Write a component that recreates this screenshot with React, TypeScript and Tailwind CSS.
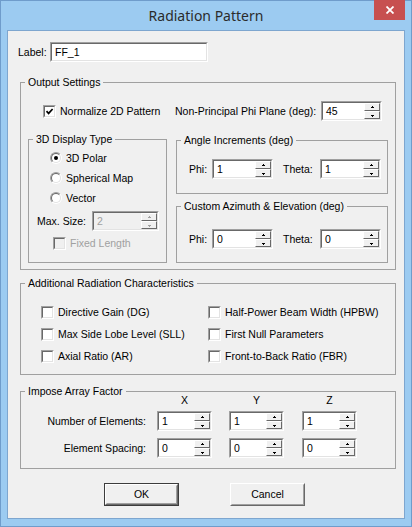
import type { ReactNode } from "react";

const outerSunken =
  "border border-t-[#a0a0a0] border-l-[#a0a0a0] border-b-white border-r-white";
const innerSunken =
  "border border-t-[#696969] border-l-[#696969] border-b-[#e3e3e3] border-r-[#e3e3e3]";

function Group({
  title,
  className,
  children,
}: {
  title: string;
  className: string;
  children?: ReactNode;
}) {
  return (
    <fieldset className={`min-w-0 border border-[#a0a0a0] ${className}`}>
      <legend className="ml-[4px] px-[3px] leading-[13px]">{title}</legend>
      {children}
    </fieldset>
  );
}

function Arrow({ up, color }: { up?: boolean; color: string }) {
  return (
    <svg width="5" height="3" viewBox="0 0 5 3" shapeRendering="crispEdges">
      {up ? (
        <>
          <rect x="2" y="0" width="1" height="1" fill={color} />
          <rect x="1" y="1" width="3" height="1" fill={color} />
        </>
      ) : (
        <>
          <rect x="1" y="1" width="3" height="1" fill={color} />
          <rect x="2" y="2" width="1" height="1" fill={color} />
        </>
      )}
    </svg>
  );
}

function SpinBtn({ up, disabled }: { up?: boolean; disabled?: boolean }) {
  return (
    <div className="flex-1 flex items-center justify-center bg-[#f0f0f0] border border-t-white border-l-white border-b-[#696969] border-r-[#696969]">
      <Arrow up={up} color={disabled ? "#a0a0a0" : "#000"} />
    </div>
  );
}

function Spin({
  value,
  w,
  disabled,
}: {
  value: string;
  w: string;
  disabled?: boolean;
}) {
  return (
    <div className={`h-[20px] shrink-0 ${w} ${outerSunken}`}>
      <div
        className={`h-full flex ${innerSunken} ${
          disabled ? "bg-[#f0f0f0]" : "bg-white"
        }`}
      >
        <span
          className={`flex-1 pl-[3px] leading-[16px] ${
            disabled ? "text-[#a0a0a0]" : "text-black"
          }`}
        >
          {value}
        </span>
        <div className="w-[16px] flex flex-col">
          <SpinBtn up disabled={disabled} />
          <SpinBtn disabled={disabled} />
        </div>
      </div>
    </div>
  );
}

function Check({ checked, disabled }: { checked?: boolean; disabled?: boolean }) {
  return (
    <div className={`w-[13px] h-[13px] shrink-0 ${outerSunken}`}>
      <div
        className={`w-full h-full flex items-center justify-center ${innerSunken} ${
          disabled ? "bg-[#f0f0f0]" : "bg-white"
        }`}
      >
        {checked && (
          <svg width="9" height="9" viewBox="0 0 9 9">
            <path d="M1.5 4.2 L3.6 6.4 L7.6 2" fill="none" stroke="#000" strokeWidth="1.7" />
          </svg>
        )}
      </div>
    </div>
  );
}

function Radio({ checked }: { checked?: boolean }) {
  return (
    <div className={`w-[12px] h-[12px] shrink-0 rounded-full ${outerSunken}`}>
      <div
        className={`w-full h-full rounded-full flex items-center justify-center bg-white ${innerSunken}`}
      >
        {checked && <div className="w-[4px] h-[4px] rounded-full bg-black" />}
      </div>
    </div>
  );
}

function CheckRow({
  label,
  checked,
  disabled,
}: {
  label: string;
  checked?: boolean;
  disabled?: boolean;
}) {
  return (
    <div className="flex items-center gap-[4px]">
      <Check checked={checked} disabled={disabled} />
      <span className={disabled ? "text-[#a0a0a0]" : ""}>{label}</span>
    </div>
  );
}

function Button({ label, primary }: { label: string; primary?: boolean }) {
  return (
    <button
      className={`w-[75px] h-[23px] ${primary ? "border border-[#3c3c3c]" : ""}`}
    >
      <div className="w-full h-full bg-[#f0f0f0] border border-t-white border-l-white border-b-[#696969] border-r-[#696969]">
        <div className="w-full h-full flex items-center justify-center border border-t-[#f0f0f0] border-l-[#f0f0f0] border-b-[#a0a0a0] border-r-[#a0a0a0]">
          {label}
        </div>
      </div>
    </button>
  );
}

export default function App() {
  return (
    <div className="w-[412px] h-[527px] flex flex-col bg-[#9ccbf1] border border-[#6f9ccb] font-['Liberation_Sans',Arial,sans-serif] text-[10.5px] leading-[13px] text-black whitespace-nowrap select-none">
      {/* title bar */}
      <div className="h-[29px] shrink-0 grid grid-cols-[1fr_auto_1fr] items-start">
        <div />
        <div className="h-[29px] flex items-center font-['Noto_Sans',sans-serif] text-[14px] text-[#2b2b2b]">
          Radiation Pattern
        </div>
        <div className="flex justify-end pr-[6px]">
          <button className="w-[31px] h-[20px] -mt-[1px] bg-[#c75050] flex items-center justify-center">
            <svg width="8" height="8" viewBox="0 0 8 8">
              <path d="M0.5 0.5 L7.5 7.5 M7.5 0.5 L0.5 7.5" stroke="#fff" strokeWidth="1.8" />
            </svg>
          </button>
        </div>
      </div>

      {/* client area */}
      <div className="mx-[6px] mb-[7px] flex-1 flex flex-col bg-[#f0f0f0] border border-[#7ea6cf]">
        <div className="mt-[11px] ml-[10px] h-[20px] flex items-center">
          <span className="w-[32px]">Label:</span>
          <div className={`w-[158px] h-[20px] ${outerSunken}`}>
            <div className={`h-full bg-white pl-[3px] leading-[16px] ${innerSunken}`}>FF_1</div>
          </div>
        </div>

        <Group title="Output Settings" className="mt-[14px] ml-[12px] w-[376px] h-[194px]">
          <div className="mt-[12px] ml-[22px] h-[20px] flex items-center">
            <div className="w-[132px]">
              <CheckRow label="Normalize 2D Pattern" checked />
            </div>
            <span className="w-[146px]">Non-Principal Phi Plane (deg):</span>
            <Spin value="45" w="w-[61px]" />
          </div>

          <div className="mt-[12px] ml-[7px] flex items-start gap-[9px]">
            <Group title="3D Display Type" className="w-[139px] h-[130px]">
              <div className="mt-[2px] pl-[21px] flex flex-col">
                <div className="h-[20px] flex items-center gap-[4px]">
                  <Radio checked />
                  <span>3D Polar</span>
                </div>
                <div className="h-[20px] flex items-center gap-[4px]">
                  <Radio />
                  <span>Spherical Map</span>
                </div>
                <div className="h-[20px] flex items-center gap-[4px]">
                  <Radio />
                  <span>Vector</span>
                </div>
              </div>
              <div className="mt-[3px] pl-[8px] h-[20px] flex items-center">
                <span className="w-[55px]">Max. Size:</span>
                <Spin value="2" w="w-[67px]" disabled />
              </div>
              <div className="mt-[4px] pl-[24px] h-[16px] flex items-center">
                <CheckRow label="Fixed Length" disabled />
              </div>
            </Group>

            <div className="mt-[1px] w-[212px] flex flex-col">
              <Group title="Angle Increments (deg)" className="h-[60px]">
                <div className="mt-[12px] ml-[12px] h-[20px] flex items-center">
                  <span className="w-[23px]">Phi:</span>
                  <Spin value="1" w="w-[61px]" />
                  <span className="ml-[10px] w-[37px]">Theta:</span>
                  <Spin value="1" w="w-[61px]" />
                </div>
              </Group>
              <Group title="Custom Azimuth &amp; Elevation (deg)" className="mt-[6px] h-[63px]">
                <div className="mt-[16px] ml-[12px] h-[20px] flex items-center">
                  <span className="w-[23px]">Phi:</span>
                  <Spin value="0" w="w-[61px]" />
                  <span className="ml-[10px] w-[37px]">Theta:</span>
                  <Spin value="0" w="w-[61px]" />
                </div>
              </Group>
            </div>
          </div>
        </Group>

        <Group title="Additional Radiation Characteristics" className="mt-[7px] ml-[12px] w-[376px] h-[98px]">
          <div className="mt-[11px] ml-[20px] grid grid-cols-[167px_auto] auto-rows-[22px] items-center">
            <CheckRow label="Directive Gain (DG)" />
            <CheckRow label="Half-Power Beam Width (HPBW)" />
            <CheckRow label="Max Side Lobe Level (SLL)" />
            <CheckRow label="First Null Parameters" />
            <CheckRow label="Axial Ratio (AR)" />
            <CheckRow label="Front-to-Back Ratio (FBR)" />
          </div>
        </Group>

        <Group title="Impose Array Factor" className="mt-[10px] ml-[12px] w-[376px] h-[84px]">
          <div className="-mt-[4px] h-[13px] flex">
            <div className="w-[136px]" />
            <span className="w-[55px] text-center">X</span>
            <span className="ml-[17px] w-[55px] text-center">Y</span>
            <span className="ml-[18px] w-[55px] text-center">Z</span>
          </div>
          <div className="mt-[4px] h-[20px] flex items-center">
            <span className="w-[125px] text-right">Number of Elements:</span>
            <div className="ml-[11px]">
              <Spin value="1" w="w-[55px]" />
            </div>
            <div className="ml-[17px]">
              <Spin value="1" w="w-[55px]" />
            </div>
            <div className="ml-[18px]">
              <Spin value="1" w="w-[55px]" />
            </div>
          </div>
          <div className="mt-[7px] h-[20px] flex items-center">
            <span className="w-[125px] text-right">Element Spacing:</span>
            <div className="ml-[11px]">
              <Spin value="0" w="w-[55px]" />
            </div>
            <div className="ml-[17px]">
              <Spin value="0" w="w-[55px]" />
            </div>
            <div className="ml-[18px]">
              <Spin value="0" w="w-[55px]" />
            </div>
          </div>
        </Group>

        <div className="mt-[14px] ml-[96px] flex gap-[51px]">
          <Button label="OK" primary />
          <Button label="Cancel" />
        </div>
      </div>
    </div>
  );
}
